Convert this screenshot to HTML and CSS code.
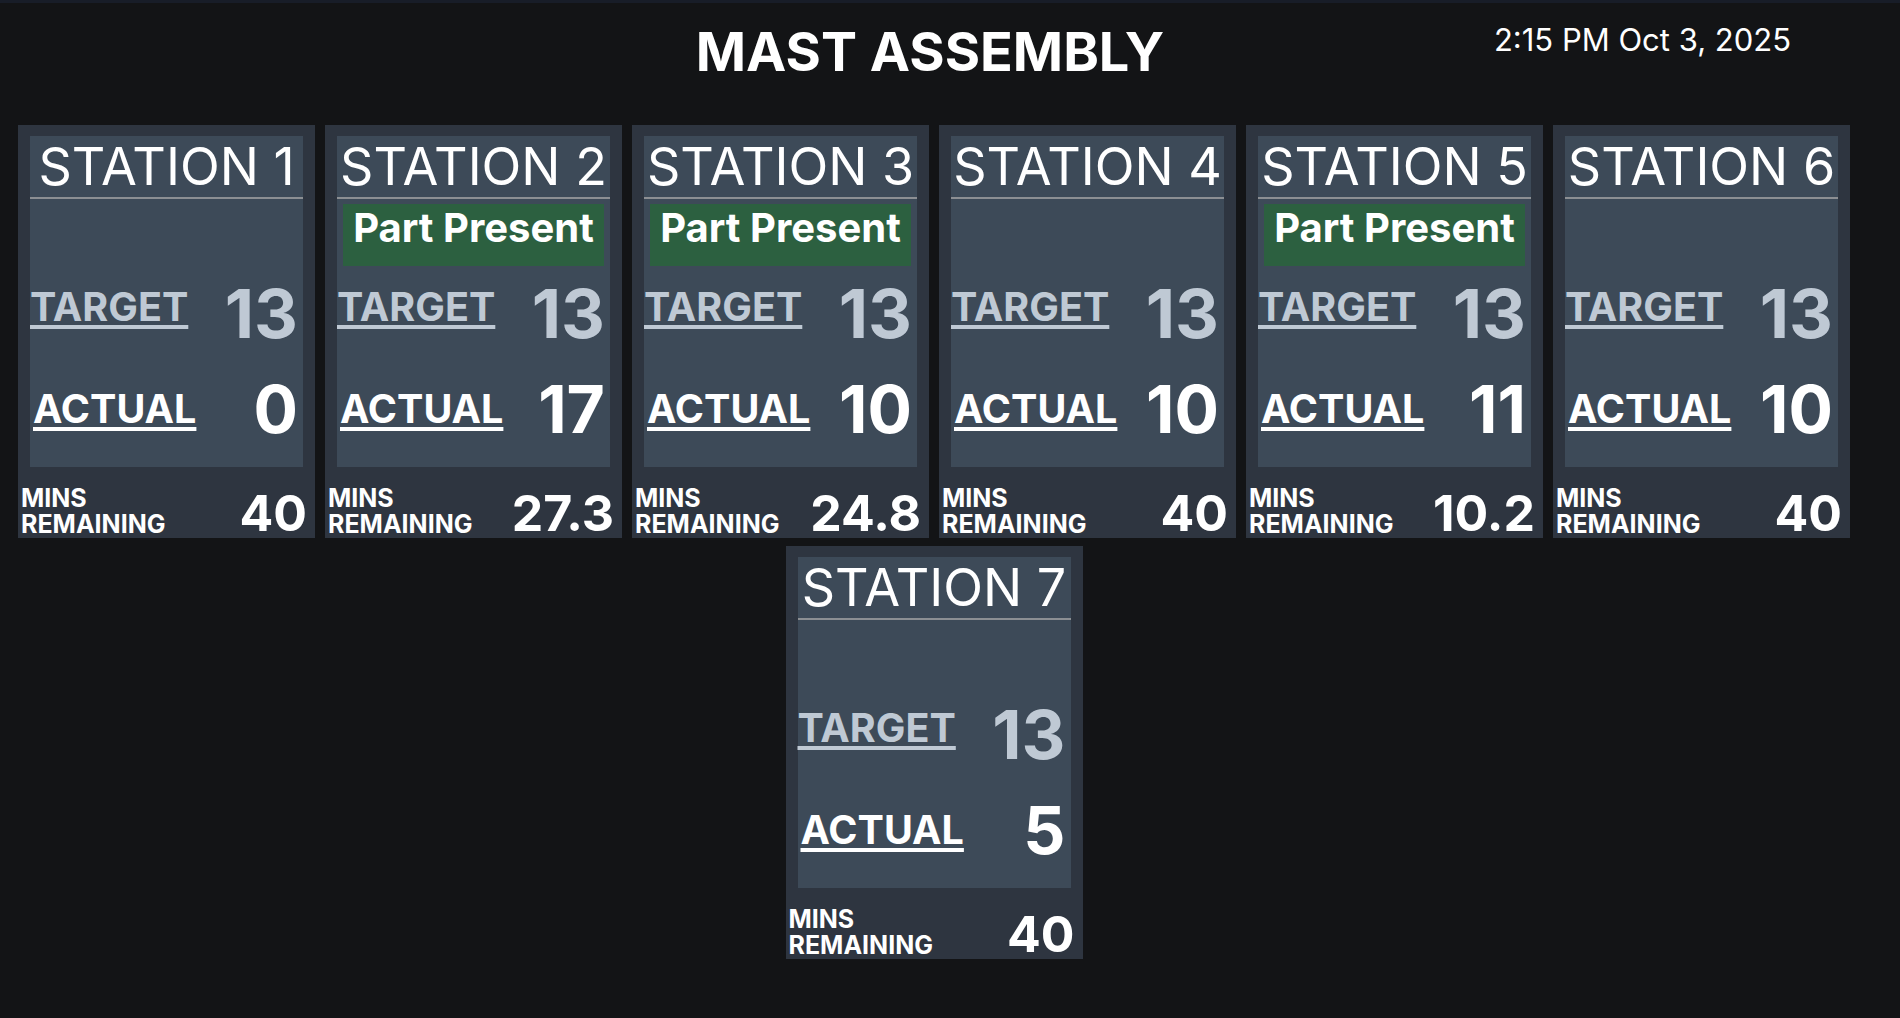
FILE: index.html
```html
<!DOCTYPE html>
<html lang="en">
<head>
<meta charset="utf-8">
<title>Mast Assembly</title>
<link rel="stylesheet" href="styles.css">
</head>
<body>
<div class="page">
  <header class="header">
    <h1 class="title">MAST ASSEMBLY</h1>
    <div class="clock">2:15 PM Oct 3, 2025</div>
  </header>
  <main class="stations">
    <section class="card">
      <div class="panel">
        <div class="st-name">STATION 1</div>
        <div class="status"></div>
        <div class="row row-target"><span class="label">TARGET</span><span class="value">13</span></div>
        <div class="row row-actual"><span class="label">ACTUAL</span><span class="value">0</span></div>
      </div>
      <div class="foot"><span class="mins">MINS<br>REMAINING</span><span class="mins-val">40</span></div>
    </section>
    <section class="card">
      <div class="panel">
        <div class="st-name">STATION 2</div>
        <div class="status present">Part Present</div>
        <div class="row row-target"><span class="label">TARGET</span><span class="value">13</span></div>
        <div class="row row-actual"><span class="label">ACTUAL</span><span class="value">17</span></div>
      </div>
      <div class="foot"><span class="mins">MINS<br>REMAINING</span><span class="mins-val">27.3</span></div>
    </section>
    <section class="card">
      <div class="panel">
        <div class="st-name">STATION 3</div>
        <div class="status present">Part Present</div>
        <div class="row row-target"><span class="label">TARGET</span><span class="value">13</span></div>
        <div class="row row-actual"><span class="label">ACTUAL</span><span class="value">10</span></div>
      </div>
      <div class="foot"><span class="mins">MINS<br>REMAINING</span><span class="mins-val">24.8</span></div>
    </section>
    <section class="card">
      <div class="panel">
        <div class="st-name">STATION 4</div>
        <div class="status"></div>
        <div class="row row-target"><span class="label">TARGET</span><span class="value">13</span></div>
        <div class="row row-actual"><span class="label">ACTUAL</span><span class="value">10</span></div>
      </div>
      <div class="foot"><span class="mins">MINS<br>REMAINING</span><span class="mins-val">40</span></div>
    </section>
    <section class="card">
      <div class="panel">
        <div class="st-name">STATION 5</div>
        <div class="status present">Part Present</div>
        <div class="row row-target"><span class="label">TARGET</span><span class="value">13</span></div>
        <div class="row row-actual"><span class="label">ACTUAL</span><span class="value">11</span></div>
      </div>
      <div class="foot"><span class="mins">MINS<br>REMAINING</span><span class="mins-val">10.2</span></div>
    </section>
    <section class="card">
      <div class="panel">
        <div class="st-name">STATION 6</div>
        <div class="status"></div>
        <div class="row row-target"><span class="label">TARGET</span><span class="value">13</span></div>
        <div class="row row-actual"><span class="label">ACTUAL</span><span class="value">10</span></div>
      </div>
      <div class="foot"><span class="mins">MINS<br>REMAINING</span><span class="mins-val">40</span></div>
    </section>
    <section class="card">
      <div class="panel">
        <div class="st-name">STATION 7</div>
        <div class="status"></div>
        <div class="row row-target"><span class="label">TARGET</span><span class="value">13</span></div>
        <div class="row row-actual"><span class="label">ACTUAL</span><span class="value">5</span></div>
      </div>
      <div class="foot"><span class="mins">MINS<br>REMAINING</span><span class="mins-val">40</span></div>
    </section>
  </main>
</div>
</body>
</html>
```
FILE: styles.css
```css
* { box-sizing: border-box; }

html, body {
  margin: 0;
  padding: 0;
  background: #131416;
}

body {
  border-top: 3px solid #181d28;
  min-height: 1018px;
  font-family: Inter, "Noto Sans", sans-serif;
  color: #ffffff;
}

.page {
  width: 1868px;
}

.header {
  position: relative;
  padding: 15.4px 8px 0 0;
  margin-bottom: 38.6px;
}

.title {
  margin: 0;
  text-align: center;
  font-size: 54px;
  line-height: 68px;
  font-weight: 700;
}

.clock {
  position: absolute;
  top: 20px;
  right: 77px;
  font-size: 31px;
  line-height: 34px;
  font-weight: 400;
}

.stations {
  display: flex;
  flex-wrap: wrap;
  justify-content: center;
  column-gap: 10px;
  row-gap: 8px;
}

.card {
  width: 297px;
  background: #2e3540;
  padding-top: 11px;
}

.panel {
  background: #3d4a58;
  margin: 0 12px;
  padding-bottom: 18px;
}

.st-name {
  text-align: center;
  font-size: 52px;
  line-height: 61px;
  font-weight: 400;
  border-bottom: 2px solid #8c8f93;
  white-space: nowrap;
}

.status {
  margin: 5px 6px 0;
  height: 62px;
  text-align: center;
  font-size: 40px;
  line-height: 48px;
  font-weight: 700;
}

.status.present {
  background: #2c6040;
}

.row {
  display: flex;
  justify-content: space-between;
  align-items: center;
  padding: 0 5px 0 0;
  font-weight: 700;
}

.row .label {
  font-size: 39.5px;
  line-height: 48px;
  text-decoration: underline;
  text-decoration-thickness: 4px;
  text-underline-offset: 4px;
}

.row-target {
  margin-top: 6px;
  height: 82px;
  color: #bfc9d4;
}

.row-target .label {
  margin-bottom: 12px;
}

.row-target .value {
  font-size: 68px;
  line-height: 82px;
}

.row-actual {
  margin-top: 15px;
  height: 80px;
  color: #ffffff;
}

.row-actual .label {
  margin-left: 3px;
}

.row-actual .value {
  font-size: 66px;
  line-height: 80px;
}

.foot {
  height: 71px;
  display: flex;
  justify-content: space-between;
  align-items: flex-end;
  padding: 0 8px 0 3px;
  font-weight: 700;
}

.mins {
  font-size: 25px;
  line-height: 26px;
  margin-bottom: 1px;
}

.mins-val {
  font-size: 50px;
  line-height: 50px;
}
```
